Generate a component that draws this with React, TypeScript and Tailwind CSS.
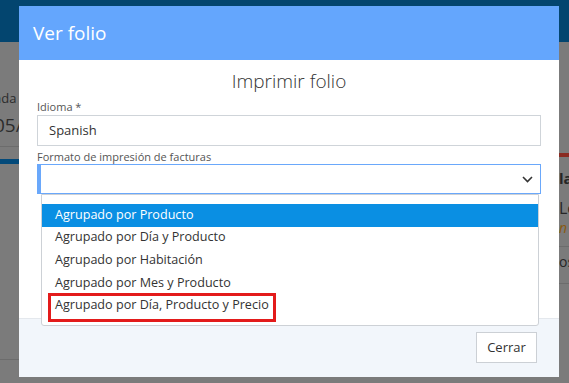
import React from 'react';

const OPCIONES = [
  'Agrupado por Producto',
  'Agrupado por Día y Producto',
  'Agrupado por Habitación',
  'Agrupado por Mes y Producto',
  'Agrupado por Día, Producto y Precio',
];

// Página de fondo atenuada detrás del modal
const FondoPagina: React.FC = () => (
  <div className="flex h-full flex-col">
    <div className="h-[42px] bg-[#03456f]" />
    <div className="flex flex-1">
      <div className="flex w-[19px] flex-col overflow-hidden text-[#2c2c2c]">
        <div className="mt-[48px] -ml-[6px] whitespace-nowrap text-[13px] leading-[16px]">ada</div>
        <div className="mt-[8px] -ml-[6px] whitespace-nowrap text-[19px] leading-[22px]">05/</div>
        <div className="mt-[10px] h-px bg-[#6c6c6c]" />
        <div className="mt-[12px] h-[5px] bg-[#034a7a]" />
        <div className="mt-[195px] h-px bg-[#6c6c6c]" />
      </div>
      <div className="flex-1" />
      <div className="flex w-[10px] flex-col overflow-hidden text-[#262626]">
        <div className="mt-[111px] h-[4px] bg-[#8a2b22]" />
        <div className="mt-[12px] whitespace-nowrap text-[15px] font-bold leading-[18px]">la</div>
        <div className="mt-[12px] whitespace-nowrap text-[16px] leading-[18px]">Lo</div>
        <div className="mt-[3px] whitespace-nowrap text-[14px] italic leading-[16px] text-[#8a5a10]">n</div>
        <div className="mt-[10px] h-px bg-[#6c6c6c]" />
        <div className="mt-[6px] whitespace-nowrap text-[14px] leading-[18px]">os</div>
        <div className="mt-[12px] h-px bg-[#6c6c6c]" />
      </div>
    </div>
  </div>
);

const App: React.FC = () => {
  return (
    <div
      className="relative h-[383px] w-[569px] overflow-hidden bg-[#7b7b7b]"
      style={{ fontFamily: '"Open Sans", "Noto Sans", sans-serif' }}
    >
      <FondoPagina />

      {/* Modal */}
      <div className="absolute left-[19px] top-[6px] flex h-[371px] w-[540px] flex-col bg-white">
        <header className="flex h-[54px] items-center bg-[#64a6fd] px-[14px]">
          <h1 className="text-[19px] text-white">Ver folio</h1>
        </header>

        <div className="h-[258px] px-[18px] pt-[8px]">
          <h2 className="text-center text-[19px] font-light leading-[26px] text-[#333]">Imprimir folio</h2>

          <label className="mt-[5px] block text-[11px] leading-[15px] text-[#555]">Idioma *</label>
          <div className="mt-px flex h-[31px] items-center border border-[#cfd4d9] pl-[11px] text-[13px] text-[#333]">
            Spanish
          </div>

          <label className="mt-[3px] block text-[11px] leading-[15px] text-[#555]">
            Formato de impresión de facturas
          </label>
          <div className="relative">
            <div className="flex h-[30px] items-center justify-end border border-[#6aa8fb] border-l-[4px] pr-[7px]">
              <svg width="11" height="7" viewBox="0 0 11 7" fill="none">
                <polyline points="1,1 5.5,5.5 10,1" stroke="#333" strokeWidth="1.6" />
              </svg>
            </div>

            {/* Lista desplegable */}
            <div className="absolute left-[4px] right-[2px] top-[30px] z-10 rounded-b-[3px] border border-[#cdd1d6] bg-white pb-[8px] pt-[9px]">
              {OPCIONES.map((op, i) => (
                <div
                  key={op}
                  className={`relative flex h-[22.6px] items-center pl-[13px] text-[12.6px] ${
                    i === 0 ? 'bg-[#0a8fe3] text-white' : 'text-[#333]'
                  }`}
                >
                  {op}
                  {i === OPCIONES.length - 1 && (
                    <div className="absolute left-[6px] top-[-1px] h-[29px] w-[228px] border-[3px] border-[#e31b1b]" />
                  )}
                </div>
              ))}
            </div>
          </div>
        </div>

        <footer className="flex flex-1 items-start justify-end border-t border-[#e4e8ed] bg-[#f2f6fb] pr-[22px] pt-[13px]">
          <button className="h-[31px] w-[61px] border border-[#ccd0d5] bg-white text-[13px] text-[#333]">
            Cerrar
          </button>
        </footer>
      </div>
    </div>
  );
};

export default App;
